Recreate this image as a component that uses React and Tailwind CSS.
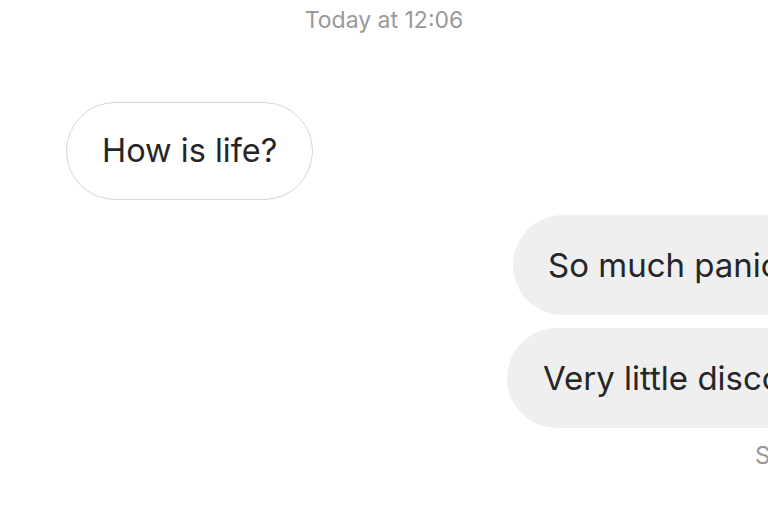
import React from 'react';

const App = () => {
    return (
        <div className="w-[768px] h-[506px] overflow-hidden bg-white font-['Inter','Liberation_Sans',sans-serif] text-[#262626]">
            {/* Timestamp */}
            <div className="h-[40px] flex items-center justify-center text-[23px] text-[#999999] leading-none">
                Today at 12:06
            </div>

            {/* Incoming message */}
            <div className="mt-[62px] pl-[66px] flex">
                <div className="h-[98px] flex items-center px-[35px] rounded-full border-[1.5px] border-[#d6d6d6] text-[32.5px] leading-none whitespace-nowrap">
                    How is life?
                </div>
            </div>

            {/* Outgoing messages */}
            <div className="mt-[15px] pl-[513px] flex">
                <div className="shrink-0 h-[100px] flex items-center pl-[35px] pr-[40px] rounded-full bg-[#efefef] text-[33px] leading-none whitespace-nowrap">
                    So much panic
                </div>
            </div>
            <div className="mt-[13px] pl-[507px] flex">
                <div className="shrink-0 h-[100px] flex items-center pl-[36px] pr-[40px] rounded-full bg-[#efefef] text-[33px] leading-none whitespace-nowrap">
                    Very little disco
                </div>
            </div>

            <div className="mt-[16px] pl-[755px] text-[24px] leading-none text-[#999999] whitespace-nowrap">
                Seen
            </div>
        </div>
    );
};

export default App;
